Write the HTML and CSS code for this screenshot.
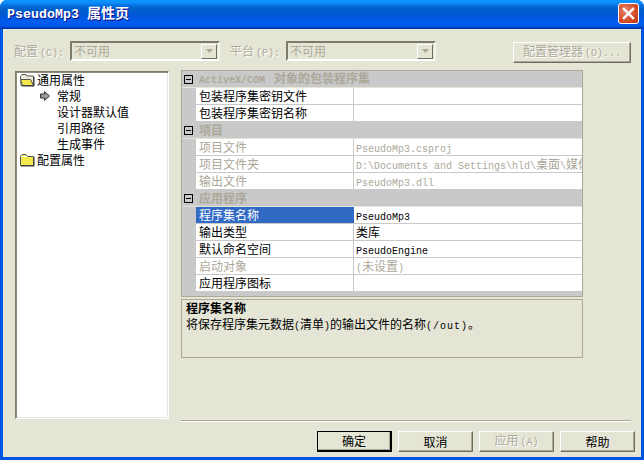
FILE: index.html
```html
<!DOCTYPE html>
<html lang="zh-CN">
<head>
<meta charset="utf-8">
<title>PseudoMp3 属性页</title>
<link rel="stylesheet" href="styles.css">
</head>
<body>
<div class="window">
  <header class="titlebar">
    <h1 class="title"><span class="title-lat">PseudoMp3 </span>属性页</h1>
    <button class="close" aria-label="关闭">
      <svg width="13" height="13" viewBox="0 0 13 13"><path d="M2 2 L11 11 M11 2 L2 11" stroke="#fff" stroke-width="2.4" stroke-linecap="square"/></svg>
    </button>
  </header>
  <div class="content">
    <div class="toolbar">
      <label class="tb-label off">配置<span class="lat">(C):</span></label>
      <div class="combo"><span class="combo-text">不可用</span><span class="combo-btn"><svg width="7" height="4" viewBox="0 0 7 4"><path d="M0 0H7L3.5 4Z" fill="#aca899"/></svg></span></div>
      <label class="tb-label tb-label2 off">平台<span class="lat">(P):</span></label>
      <div class="combo"><span class="combo-text">不可用</span><span class="combo-btn"><svg width="7" height="4" viewBox="0 0 7 4"><path d="M0 0H7L3.5 4Z" fill="#aca899"/></svg></span></div>
      <button class="btn btn-config off">配置管理器<span class="lat">(O)...</span></button>
    </div>
    <div class="main">
      <nav class="tree">
        <div class="tree-row top">
          <svg class="ti" width="16" height="14" viewBox="0 0 16 14"><path d="M1.5 3.5 L3 1.5H7L8 3H14.5V12.5H2Z" fill="#ece9d8" stroke="#555"/><path d="M1.5 6.5H11.5L14.5 12.5H3.5Z" fill="#f4e84c" stroke="#555"/><path d="M15 4V13H3" fill="none" stroke="#333"/></svg>
          <span>通用属性</span>
        </div>
        <div class="tree-row sub">
          <svg class="arrow" width="10" height="10" viewBox="0 0 10 10"><path d="M0.5 3H4.5V0.5L9.5 5L4.5 9.5V7H0.5Z" fill="#9a9a9a" stroke="#333" stroke-width="1"/></svg>
          <span>常规</span>
        </div>
        <div class="tree-row sub-plain"><span>设计器默认值</span></div>
        <div class="tree-row sub-plain"><span>引用路径</span></div>
        <div class="tree-row sub-plain"><span>生成事件</span></div>
        <div class="tree-row top">
          <svg class="ti" width="16" height="14" viewBox="0 0 16 14"><path d="M1.5 12.5V3L3 1.5H7L8.5 3.5H14.5V12.5Z" fill="#f4e84c" stroke="#555"/><path d="M2 3.5H8" stroke="#fff"/><path d="M15 4V13H2" fill="none" stroke="#333"/></svg>
          <span>配置属性</span>
        </div>
      </nav>
      <div class="right">
        <div class="grid">
          <div class="group"><i class="minus"></i><b><span class="lat group-lat">ActiveX/COM </span>对象的包装程序集</b></div>
          <div class="row"><div class="k">包装程序集密钥文件</div><div class="v"></div></div>
          <div class="row"><div class="k">包装程序集密钥名称</div><div class="v"></div></div>
          <div class="group"><i class="minus"></i><b>项目</b></div>
          <div class="row dis"><div class="k">项目文件</div><div class="v"><span class="lat">PseudoMp3.csproj</span></div></div>
          <div class="row dis"><div class="k">项目文件夹</div><div class="v"><span class="lat">D:\Documents and Settings\hld\</span>桌面<span class="lat">\</span>媒体</div></div>
          <div class="row dis"><div class="k">输出文件</div><div class="v"><span class="lat">PseudoMp3.dll</span></div></div>
          <div class="group"><i class="minus"></i><b>应用程序</b></div>
          <div class="row"><div class="k sel">程序集名称</div><div class="v"><span class="lat">PseudoMp3</span></div></div>
          <div class="row"><div class="k">输出类型</div><div class="v">类库</div></div>
          <div class="row"><div class="k">默认命名空间</div><div class="v"><span class="lat">PseudoEngine</span></div></div>
          <div class="row dis"><div class="k">启动对象</div><div class="v"><span class="lat">(</span>未设置<span class="lat">)</span></div></div>
          <div class="row"><div class="k">应用程序图标</div><div class="v"></div></div>
        </div>
        <div class="desc">
          <div class="desc-title">程序集名称</div>
          <div class="desc-text">将保存程序集元数据<span class="lat">(</span>清单<span class="lat">)</span>的输出文件的名称<span class="lat desc-lat">(/out)</span>。</div>
        </div>
        <div class="sep"></div>
      </div>
    </div>
    <div class="actions">
      <button class="btn btn-act default">确定</button>
      <button class="btn btn-act">取消</button>
      <button class="btn btn-act off">应用<span class="lat">(A)</span></button>
      <button class="btn btn-act">帮助</button>
    </div>
  </div>
</div>
</body>
</html>
```
FILE: styles.css
```css
* { box-sizing: border-box; }
html, body { margin: 0; padding: 0; background: #fff; }
body { width: 644px; height: 460px; overflow: hidden; font: 12px/16px "Noto Sans CJK SC", sans-serif; color: #000; }
.lat { font-family: "Liberation Mono", monospace; font-size: 10px; }
.window { width: 644px; height: 460px; display: flex; flex-direction: column; background: #0054e3; border-radius: 7px 7px 0 0; overflow: hidden; }
.titlebar { flex: 0 0 29px; display: flex; align-items: center; justify-content: space-between; padding: 0 5px 3px 7px;
  background: linear-gradient(to bottom, #0997ff 0, #0f8cfa 3px, #0672e6 5px, #0060c8 9px, #0056d8 16px, #005cf0 22px, #0058e8 26px, #0040c0 28px, #0030a0 29px); }
.title { margin: 0; font: bold 14px/16px "Noto Sans CJK SC", sans-serif; color: #fff; text-shadow: 1px 1px #0f1089; }
.title-lat { font-family: "Liberation Mono", monospace; font-size: 13.33px; white-space: pre; }
.close { width: 21px; height: 21px; padding: 0; border: 1px solid #fff; border-radius: 3px; display: flex; align-items: center; justify-content: center;
  background: radial-gradient(circle at 35% 35%, #e8866a, #d4502c 55%, #c03010); }
.content { flex: 1; margin: 0 3px 3px; background: #e5e5d6; display: flex; flex-direction: column; min-height: 0; }
.off { color: #aca899; text-shadow: 1px 1px #fff; }
.toolbar { display: flex; align-items: flex-start; margin-top: 12px; padding: 0 10px 0 11px; height: 29px; }
.tb-label { width: 56px; line-height: 20px; }
.tb-label .lat { margin-left: 2px; }
.tb-label2 { margin-left: 10px; }
.combo { width: 150px; height: 20px; display: flex; align-items: center; justify-content: space-between; border: 2px solid; border-color: #7c7b6c #f4f4ee #fff #7c7b6c; padding: 0 1px 0 2px; background: #e5e5d6; }
.combo-text { color: #aca899; }
.combo-btn { width: 16px; height: 15px; display: flex; align-items: center; justify-content: center; border: 1px solid; border-color: #fff #6f6e60 #6f6e60 #fff; background: #e5e5d6; }
.btn { font: inherit; padding: 0; color: #000; background: #e5e5d6; border: 1px solid; border-color: #fff #6f6e60 #6f6e60 #fff; box-shadow: inset -1px -1px #aca899; }
.btn.off { color: #aca899; text-shadow: 1px 1px #fff; }
.btn .lat { margin-left: 2px; }
.btn-config { margin-left: auto; margin-top: 1px; width: 118px; height: 21px; }
.main { flex: 0 0 352px; display: flex; padding-left: 12px; }
.tree { width: 154px; height: 348px; margin-top: 1px; background: #fff; border: 1px solid; border-color: #7c7b6c #fff #fff #7c7b6c; box-shadow: inset 1px 1px #8c8b7c, inset -1px -1px #e6e6e6; }
.tree-row { height: 16px; display: flex; align-items: center; white-space: nowrap; }
.tree-row.top { padding-left: 3px; }
.tree-row .ti { flex: none; margin-right: 2px; }
.tree-row.sub { padding-left: 24px; }
.tree-row.sub .arrow { flex: none; margin-right: 7px; }
.tree-row.sub-plain { padding-left: 41px; }
.right { width: 450px; margin-left: 12px; display: flex; flex-direction: column; }
.grid { width: 402px; height: 227px; border: 1px solid #aca899; background: #c9c9c9; flex: none; overflow: hidden; }
.group { height: 17px; display: flex; align-items: center; padding-left: 2px; border-bottom: 1px solid #e5e5d6; color: #aca899; white-space: nowrap; }
.group b { margin-left: 6px; }
.group-lat { margin-right: 3px; }
.minus { flex: none; width: 9px; height: 9px; border: 1px solid #000; background: linear-gradient(#000, #000) center / 5px 1px no-repeat; }
.row { height: 17px; margin-left: 14px; display: flex; background: #fff; border-bottom: 1px solid #c9c9c9; white-space: nowrap; }
.k { width: 158px; padding-left: 3px; line-height: 16px; border-right: 1px solid #c9c9c9; flex: none; overflow: hidden; }
.k.sel { background: #316ac5; color: #fff; border-right-color: #316ac5; }
.v { flex: 1; padding-left: 2px; line-height: 16px; overflow: hidden; }
.dis { color: #aca899; }
.desc { flex: none; width: 402px; height: 59px; margin-top: 2px; border: 1px solid #aca899; padding: 0 4px; }
.desc-title { font-weight: bold; }
.desc-lat { letter-spacing: 1px; }
.sep { margin-top: auto; width: 450px; height: 2px; background: #aca899; border-bottom: 1px solid #fff; }
.actions { display: flex; justify-content: flex-end; gap: 6px; padding-right: 6px; margin-top: 9px; }
.btn-act { width: 75px; height: 21px; }
.btn-act.default { border: 1px solid #000; border-right-width: 2px; border-bottom-width: 2px; }
```
